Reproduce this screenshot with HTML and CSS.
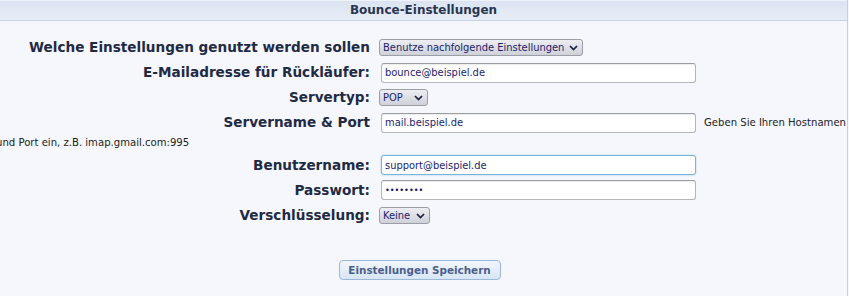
FILE: index.html
```html
<!DOCTYPE html>
<html lang="de">
<head>
  <meta charset="UTF-8">
  <meta name="viewport" content="width=device-width, initial-scale=1.0">
  <title>Bounce-Einstellungen</title>
  <link rel="stylesheet" href="styles.css">
</head>
<body>

  <div class="panel">
    <div class="panel-head">Bounce-Einstellungen</div>

    <form class="settings" id="bounce-form">
      <div class="row">
        <label for="bounce-mode">Welche Einstellungen genutzt werden sollen</label><span class="select-wrap"><select id="bounce-mode" class="select-wide">
            <option>Benutze nachfolgende Einstellungen</option>
          </select><svg class="chevron" viewBox="0 0 9 6"><polyline points="1,1 4.5,4.6 8,1"/></svg></span>
      </div>
      <div class="row">
        <label for="bounce-email">E-Mailadresse für Rückläufer:</label><input type="text" id="bounce-email" value="bounce@beispiel.de">
      </div>
      <div class="row">
        <label for="server-type">Servertyp:</label><span class="select-wrap"><select id="server-type" class="select-pop">
            <option>POP</option>
          </select><svg class="chevron" viewBox="0 0 9 6"><polyline points="1,1 4.5,4.6 8,1"/></svg></span>
      </div>
      <div class="row">
        <label for="server-name">Servername &amp; Port</label><input type="text" id="server-name" value="mail.beispiel.de"><span class="help">Geben Sie Ihren Hostnamen und Port ein, z.B. imap.gmail.com:995</span>
      </div>
      <div class="row">
        <label for="username">Benutzername:</label><input type="text" id="username" class="is-focus" value="support@beispiel.de">
      </div>
      <div class="row">
        <label for="password">Passwort:</label><input type="password" id="password" value="geheim12">
      </div>
      <div class="row">
        <label for="encryption">Verschlüsselung:</label><span class="select-wrap"><select id="encryption" class="select-small">
            <option>Keine</option>
          </select><svg class="chevron" viewBox="0 0 9 6"><polyline points="1,1 4.5,4.6 8,1"/></svg></span>
      </div>

      <div class="actions">
        <button type="submit">Einstellungen Speichern</button>
      </div>
    </form>
  </div>

</body>
</html>
```

FILE: styles.css
```css
body {
  font-family: "DejaVu Sans", Verdana, sans-serif;
  margin: 0;
  padding: 0;
  background-color: #f5f7fc;
  color: #1f2a44;
  overflow: hidden;
}

.panel {
  width: 847px;
  height: 296px;
  overflow: hidden;
  border-right: 1px solid #c9ced8;
  background-color: #f5f7fc;
}

.panel-head {
  height: 19px;
  line-height: 19px;
  border-top: 1px solid #eef2f9;
  border-bottom: 1px solid #c4d3e7;
  background: linear-gradient(#dbe4f1, #e7edf7);
  text-align: center;
  font-size: 12px;
  font-weight: bold;
  color: #2a3550;
}

.settings {
  margin-left: -4px;
  margin-right: -8px;
  padding-top: 14px;
}

.row {
  line-height: 17px;
  padding: 2px 0;
  font-size: 11px;
}

.row label {
  display: inline-block;
  width: 374px;
  height: 21px;
  line-height: 21px;
  margin-right: 11px;
  text-align: right;
  vertical-align: middle;
  font-size: 13.6px;
  font-weight: bold;
  color: #1f2a44;
  white-space: nowrap;
}

.row input {
  box-sizing: border-box;
  width: 315px;
  height: 20px;
  padding: 0 3px;
  vertical-align: middle;
  border: 1px solid #b4b6bc;
  border-top-color: #9a9ca3;
  border-radius: 3px;
  background: #fff;
  box-shadow: inset 0 1px 1px rgba(0, 0, 0, 0.08);
  font-family: "DejaVu Sans Condensed", "DejaVu Sans", sans-serif;
  font-stretch: condensed;
  font-size: 11px;
  color: #1d1d6b;
  outline: none;
}

.row input.is-focus {
  border-color: #78b3dc;
  box-shadow: 0 0 2px #9ccbeb;
}

.row input[type="password"] {
  font-size: 9px;
  color: #13135a;
}

.select-wrap {
  position: relative;
  display: inline-block;
  margin-left: -2px;
  vertical-align: middle;
  height: 17px;
}

.select-wrap select {
  -webkit-appearance: none;
  appearance: none;
  box-sizing: border-box;
  height: 17px;
  padding: 0 16px 0 3px;
  border: 1px solid #9c9ea6;
  border-radius: 3px;
  background: linear-gradient(#eceef3, #cfd1d9);
  font-family: "DejaVu Sans Condensed", "DejaVu Sans", sans-serif;
  font-stretch: condensed;
  font-size: 11px;
  color: #1d1d6b;
  vertical-align: top;
}

.select-wide {
  width: 204px;
}

.select-pop {
  width: 49px;
}

.select-small {
  width: 51px;
}

.chevron {
  position: absolute;
  right: 5px;
  top: 6px;
  width: 9px;
  height: 6px;
  fill: none;
  stroke: #1c2140;
  stroke-width: 1.7;
}

.help {
  margin-left: 8px;
  font-size: 10.1px;
  color: #222;
  vertical-align: middle;
}

.actions {
  text-align: center;
  padding-top: 31px;
  padding-right: 12px;
}

.actions button {
  width: 162px;
  height: 20px;
  padding: 0;
  border: 1px solid #9cb8d9;
  border-radius: 4px;
  background: linear-gradient(#f1f6fd, #d8e5f4);
  font-family: "DejaVu Sans", Verdana, sans-serif;
  font-size: 10.4px;
  font-weight: bold;
  color: #4b5e8b;
  cursor: pointer;
}
```
